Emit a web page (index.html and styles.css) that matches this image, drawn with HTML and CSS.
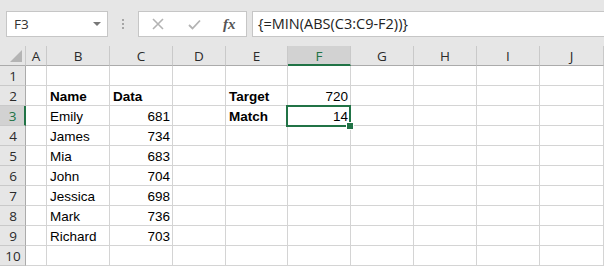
FILE: index.html
```html
<!DOCTYPE html>
<html lang="en">
<head>
    <meta charset="UTF-8">
    <title>MIN ABS</title>
    <link rel="stylesheet" href="styles.css">
</head>
<body>
<!--编辑栏-->
<div class="topbar">
    <div class="namebox">
        <span>F3</span>
        <span class="arrow"></span>
    </div>
    <div class="dots"><i></i><i></i><i></i></div>
    <div class="fxbox">
        <svg class="icon" width="12" height="12" viewBox="0 0 12 12"><path d="M1 1L11 11M11 1L1 11" stroke="#b3b3b3" stroke-width="1.6" fill="none"/></svg>
        <svg class="icon" width="13" height="11" viewBox="0 0 13 11"><path d="M1 6L4.5 9.5L12 1.5" stroke="#b3b3b3" stroke-width="1.8" fill="none"/></svg>
        <span class="fx">fx</span>
    </div>
    <div class="formula">{=MIN(ABS(C3:C9-F2))}</div>
</div>
<!--表格-->
<div class="sheet">
    <div class="hd corner"><span class="tri"></span></div>
    <div class="hd">A</div>
    <div class="hd">B</div>
    <div class="hd">C</div>
    <div class="hd">D</div>
    <div class="hd">E</div>
    <div class="hd col-on">F</div>
    <div class="hd">G</div>
    <div class="hd">H</div>
    <div class="hd">I</div>
    <div class="hd">J</div>

    <div class="rh">1</div>
    <div class="c"></div><div class="c"></div><div class="c"></div><div class="c"></div><div class="c"></div>
    <div class="c"></div><div class="c"></div><div class="c"></div><div class="c"></div><div class="c"></div>

    <div class="rh">2</div>
    <div class="c"></div><div class="c b">Name</div><div class="c b">Data</div><div class="c"></div><div class="c b">Target</div>
    <div class="c num">720</div><div class="c"></div><div class="c"></div><div class="c"></div><div class="c"></div>

    <div class="rh row-on">3</div>
    <div class="c"></div><div class="c">Emily</div><div class="c num">681</div><div class="c"></div><div class="c b">Match</div>
    <div class="c num sel">14</div><div class="c"></div><div class="c"></div><div class="c"></div><div class="c"></div>

    <div class="rh">4</div>
    <div class="c"></div><div class="c">James</div><div class="c num">734</div><div class="c"></div><div class="c"></div>
    <div class="c"></div><div class="c"></div><div class="c"></div><div class="c"></div><div class="c"></div>

    <div class="rh">5</div>
    <div class="c"></div><div class="c">Mia</div><div class="c num">683</div><div class="c"></div><div class="c"></div>
    <div class="c"></div><div class="c"></div><div class="c"></div><div class="c"></div><div class="c"></div>

    <div class="rh">6</div>
    <div class="c"></div><div class="c">John</div><div class="c num">704</div><div class="c"></div><div class="c"></div>
    <div class="c"></div><div class="c"></div><div class="c"></div><div class="c"></div><div class="c"></div>

    <div class="rh">7</div>
    <div class="c"></div><div class="c">Jessica</div><div class="c num">698</div><div class="c"></div><div class="c"></div>
    <div class="c"></div><div class="c"></div><div class="c"></div><div class="c"></div><div class="c"></div>

    <div class="rh">8</div>
    <div class="c"></div><div class="c">Mark</div><div class="c num">736</div><div class="c"></div><div class="c"></div>
    <div class="c"></div><div class="c"></div><div class="c"></div><div class="c"></div><div class="c"></div>

    <div class="rh">9</div>
    <div class="c"></div><div class="c">Richard</div><div class="c num">703</div><div class="c"></div><div class="c"></div>
    <div class="c"></div><div class="c"></div><div class="c"></div><div class="c"></div><div class="c"></div>

    <div class="rh">10</div>
    <div class="c"></div><div class="c"></div><div class="c"></div><div class="c"></div><div class="c"></div>
    <div class="c"></div><div class="c"></div><div class="c"></div><div class="c"></div><div class="c"></div>
</div>
</body>
</html>
```

FILE: styles.css
```css
* {
    margin: 0;
    padding: 0;
    box-sizing: border-box;
}

body {
    width: 604px;
    height: 267px;
    overflow: hidden;
    background-color: #ffffff;
    font-family: "Open Sans", "Liberation Sans", sans-serif;
    color: #222222;
}

/* 编辑栏 */
.topbar {
    display: flex;
    align-items: flex-start;
    height: 46px;
    padding: 11px 0 0 6px;
    background-color: #e6e6e6;
}

.namebox {
    width: 102px;
    height: 26px;
    border: 1px solid #c6c6c6;
    background-color: #ffffff;
    display: flex;
    align-items: center;
    justify-content: space-between;
    padding: 0 6px 0 7px;
    font-size: 13.5px;
    color: #333333;
}

.arrow {
    width: 0;
    height: 0;
    border-left: 4px solid transparent;
    border-right: 4px solid transparent;
    border-top: 4px solid #777777;
}

.dots {
    width: 30px;
    height: 26px;
    display: flex;
    flex-direction: column;
    align-items: center;
    justify-content: center;
    gap: 2px;
}

.dots i {
    display: block;
    width: 2px;
    height: 2px;
    background-color: #a6a6a6;
}

.fxbox {
    width: 109px;
    height: 26px;
    border: 1px solid #c6c6c6;
    background-color: #ffffff;
    display: flex;
    align-items: center;
    padding-left: 13px;
    gap: 24px;
}

.fx {
    font-family: "Liberation Serif", serif;
    font-style: italic;
    font-weight: bold;
    font-size: 15px;
    color: #555555;
    margin-left: -2px;
}

.formula {
    flex: 1;
    height: 26px;
    margin-left: 5px;
    border: 1px solid #c6c6c6;
    border-right: none;
    background-color: #ffffff;
    padding-left: 5px;
    font-size: 14.5px;
    line-height: 24px;
    color: #222222;
}

/* 表格 */
.sheet {
    display: grid;
    grid-template-columns: 26px 21px 63px 63px 53px 62px 63px 63px 63px 63px 64px;
    grid-auto-rows: 20px;
}

.hd, .rh {
    background-color: #e6e6e6;
    font-size: 13.5px;
    color: #2b2b2b;
    text-align: center;
    line-height: 20px;
}

.hd {
    border-right: 1px solid #c9c9c9;
    border-bottom: 1px solid #ababab;
}

.rh {
    border-right: 1px solid #ababab;
    border-bottom: 1px solid #c9c9c9;
    padding-left: 1px;
}

.corner {
    position: relative;
}

.tri {
    position: absolute;
    right: 3px;
    bottom: 3px;
    width: 0;
    height: 0;
    border-left: 12px solid transparent;
    border-bottom: 12px solid #b4b4b4;
}

.col-on {
    background-color: #d2d2d2;
    border-bottom: 2px solid #217346;
    color: #217346;
}

.row-on {
    background-color: #d2d2d2;
    border-right: 2px solid #217346;
    color: #217346;
}

.c {
    border-right: 1px solid #d4d4d4;
    border-bottom: 1px solid #d4d4d4;
    padding: 0 2px 0 3px;
    font-family: "Liberation Sans", Arial, sans-serif;
    font-size: 13.5px;
    line-height: 22px;
    color: #000000;
    white-space: nowrap;
}

.b {
    font-weight: bold;
}

.num {
    text-align: right;
}

.sel {
    position: relative;
}

.sel::before {
    content: "";
    position: absolute;
    left: -2px;
    top: -1px;
    right: -1px;
    bottom: -2px;
    border: 2px solid #217346;
}

.sel::after {
    content: "";
    position: absolute;
    right: -4px;
    bottom: -5px;
    width: 6px;
    height: 6px;
    background-color: #217346;
    border: 1px solid #ffffff;
}
```
